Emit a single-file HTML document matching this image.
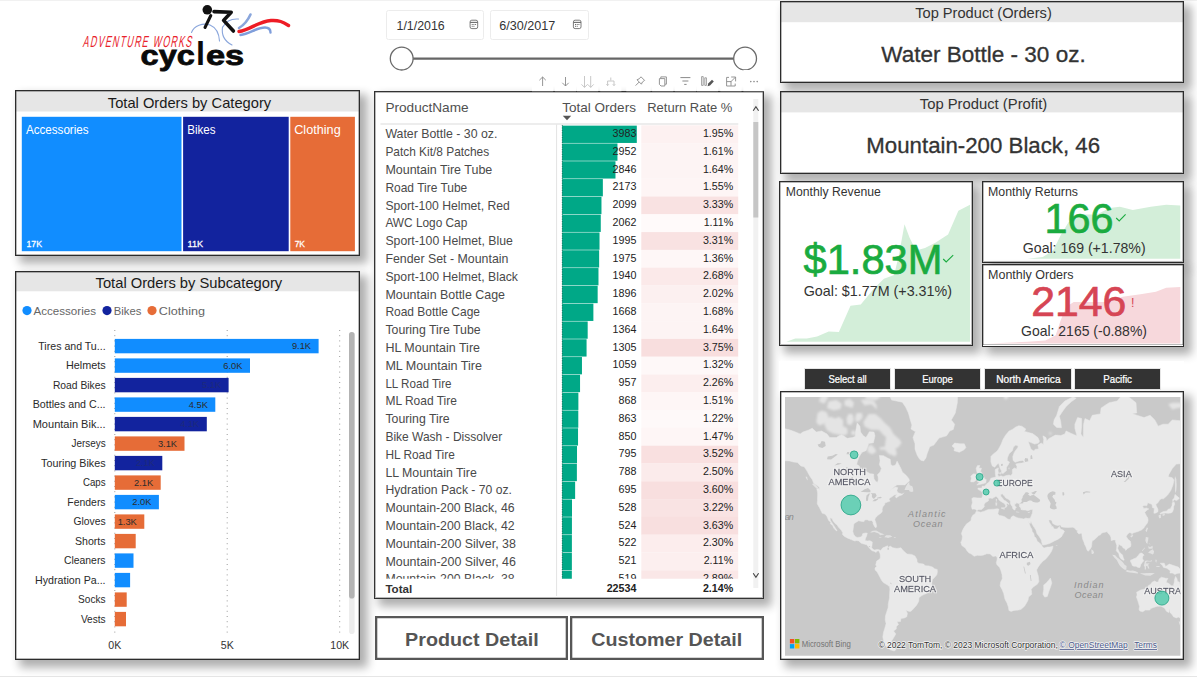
<!DOCTYPE html>
<html lang="en"><head><meta charset="utf-8">
<title>Adventure Works Cycles - Executive Dashboard</title>
<style>
html,body{margin:0;padding:0;}
body{width:1197px;height:677px;overflow:hidden;background:#fff;position:relative;font-family:"Liberation Sans","DejaVu Sans",sans-serif;color:#333;}
.topline{position:absolute;left:0;top:0;width:1197px;height:1px;background:#f1f1f1;}
.botline{position:absolute;left:0;top:675.5px;width:1197px;height:1.5px;background:#e6e6e6;}
.panel{position:absolute;box-sizing:border-box;background:#fff;border:1px solid #2b2b2b;box-shadow:5.5px 5.5px 9px 2px rgba(0,0,0,.32);}
.panel svg.pv{position:absolute;left:-1px;top:-1px;overflow:hidden;}
svg text{font-family:"Liberation Sans","DejaVu Sans",sans-serif;}
.btn{position:absolute;box-sizing:border-box;background:#fff;box-shadow:inset 0 0 0 2.3px #575757;}
.slc{position:absolute;box-sizing:border-box;background:#333;box-shadow:0 0 0 1px #e6e6e6;}
.datebox{position:absolute;box-sizing:border-box;border:1px solid #ececec;border-radius:2.5px;background:#fff;}
</style></head><body>
<div class="topline"></div><div class="botline"></div>

<svg id="logo" style="position:absolute;left:60px;top:0" width="260" height="90" viewBox="60 0 260 90">
<g fill="none" stroke="#8aa6dc" stroke-width="1.1" stroke-linecap="round">
<path d="M191.5 32.5 C194 25.5 203 22.5 210 25 C216 27.5 219 33 219.5 41"/>
<path d="M222.5 27 C221.5 34 224 41 232 45"/>
<path d="M222.8 27 C226 21 232 18.5 238.5 19"/>
</g>
<g fill="none" stroke-linecap="round">
<path d="M239 28 C244 25 248 20 250.5 14.5" stroke="#8aa6dc" stroke-width="2.6"/>
<path d="M240.5 35 C250 34 256 27.5 265 27.5 C268.5 27.5 270.5 29.5 270.5 32.5" stroke="#7f9edb" stroke-width="2.4"/>
<path d="M239 31.5 C250 30 258 21.5 271 20.5 C279 20 283 22 288.5 25.5" stroke="#ee1c25" stroke-width="3.4"/>
</g>
<circle cx="207.3" cy="9.8" r="4.8" fill="#111"/>
<g fill="none" stroke="#111" stroke-linecap="round" stroke-linejoin="round">
<path d="M210.8 15.5 L205 27.5" stroke-width="3"/>
<path d="M214 11.6 L231.2 12.2 L223.6 20.4 L233.4 31" stroke-width="3.6"/>
</g>
<g transform="translate(82.6,46.7) skewX(-12) scale(0.55,1)"><text x="0.00" y="0.00" font-size="16" fill="#e8222b" textLength="197.27" lengthAdjust="spacing">ADVENTURE WORKS</text></g>
<text y="64.7" font-weight="bold" fill="#0a0a0a" stroke="#0a0a0a" stroke-width="0.8"><tspan x="140.6" font-size="27.5" textLength="54.3" lengthAdjust="spacingAndGlyphs">cyc</tspan><tspan x="195.9" font-size="34" stroke-width="0" textLength="9" lengthAdjust="spacingAndGlyphs">l</tspan><tspan x="206" font-size="27.5" textLength="38.2" lengthAdjust="spacingAndGlyphs">es</tspan></text>
</svg>
<div class="panel treemap" style="left:15px;top:90px;width:344.5px;height:165.5px;">
<svg class="pv" width="344.5" height="165.5" viewBox="15 90 344.5 165.5">
<rect x="16" y="91" width="343" height="20.5" fill="#e6e6e6"/>
<text x="189.50" y="107.60" font-size="14.6" fill="#1a1a1a" text-anchor="middle" textLength="163.40" lengthAdjust="spacingAndGlyphs">Total Orders by Category</text>
<rect x="21.8" y="116.8" width="159.7" height="134.4" fill="#118dff"/>
<rect x="183.1" y="116.8" width="105.6" height="134.4" fill="#12239e"/>
<rect x="290.3" y="116.8" width="64.6" height="134.4" fill="#e66c37"/>
<text x="25.90" y="133.50" font-size="12" fill="#fff" textLength="62.70" lengthAdjust="spacingAndGlyphs">Accessories</text>
<text x="187.20" y="133.50" font-size="12" fill="#fff" textLength="28.30" lengthAdjust="spacingAndGlyphs">Bikes</text>
<text x="294.20" y="133.50" font-size="12" fill="#fff" textLength="46.50" lengthAdjust="spacingAndGlyphs">Clothing</text>
<text x="26.50" y="247.00" font-size="9.8" fill="#fff" textLength="15.50" lengthAdjust="spacingAndGlyphs" stroke="#fff" stroke-width="0.3">17K</text>
<text x="187.60" y="247.00" font-size="9.8" fill="#fff" textLength="15.50" lengthAdjust="spacingAndGlyphs" stroke="#fff" stroke-width="0.3">11K</text>
<text x="294.70" y="247.00" font-size="9.8" fill="#fff" textLength="10.30" lengthAdjust="spacingAndGlyphs" stroke="#fff" stroke-width="0.3">7K</text>
<rect x="16.2" y="91.2" width="342.6" height="163.6" fill="none" stroke="#2b2b2b" stroke-opacity="0.8" stroke-width="0.4"/>
</svg></div>
<div class="panel bars" style="left:15px;top:271px;width:344.5px;height:389px;">
<svg class="pv" width="344.5" height="389" viewBox="15 271 344.5 389">
<rect x="16" y="272" width="343" height="19.3" fill="#e6e6e6"/>
<text x="188.90" y="287.60" font-size="14.6" fill="#1a1a1a" text-anchor="middle" textLength="186.70" lengthAdjust="spacingAndGlyphs">Total Orders by Subcategory</text>
<circle cx="27" cy="310.6" r="4.6" fill="#118dff"/>
<text x="33.50" y="314.60" font-size="11.6" fill="#666" textLength="62.50" lengthAdjust="spacingAndGlyphs">Accessories</text>
<circle cx="107" cy="310.6" r="4.6" fill="#12239e"/>
<text x="113.80" y="314.60" font-size="11.6" fill="#666" textLength="27.60" lengthAdjust="spacingAndGlyphs">Bikes</text>
<circle cx="152" cy="310.6" r="4.6" fill="#e66c37"/>
<text x="158.80" y="314.60" font-size="11.6" fill="#666" textLength="46.20" lengthAdjust="spacingAndGlyphs">Clothing</text>
<line x1="114.8" y1="330" x2="114.8" y2="634" stroke="#9a9a9a" stroke-width="1" stroke-dasharray="1 4.2"/>
<line x1="227.2" y1="330" x2="227.2" y2="634" stroke="#9a9a9a" stroke-width="1" stroke-dasharray="1 4.2"/>
<line x1="339.7" y1="330" x2="339.7" y2="634" stroke="#9a9a9a" stroke-width="1" stroke-dasharray="1 4.2"/>
<rect x="114.8" y="338.9" width="203.8" height="14.4" fill="#118dff"/>
<text x="105.60" y="349.70" font-size="11" fill="#2a2a2a" text-anchor="end" textLength="67.30" lengthAdjust="spacingAndGlyphs">Tires and Tu...</text>
<text x="311.06" y="349.30" font-size="9.3" fill="#2b2b2b" text-anchor="end">9.1K</text>
<rect x="114.8" y="358.4" width="135.2" height="14.4" fill="#118dff"/>
<text x="105.60" y="369.20" font-size="11" fill="#2a2a2a" text-anchor="end" textLength="39.70" lengthAdjust="spacingAndGlyphs">Helmets</text>
<text x="242.46" y="368.80" font-size="9.3" fill="#2b2b2b" text-anchor="end">6.0K</text>
<rect x="114.8" y="377.9" width="113.8" height="14.4" fill="#12239e"/>
<text x="105.60" y="388.70" font-size="11" fill="#2a2a2a" text-anchor="end" textLength="52.70" lengthAdjust="spacingAndGlyphs">Road Bikes</text>
<text x="221.10" y="388.30" font-size="9.3" fill="#1d2a7a" text-anchor="end">5.1K</text>
<rect x="114.8" y="397.4" width="100.5" height="14.4" fill="#118dff"/>
<text x="105.60" y="408.20" font-size="11" fill="#2a2a2a" text-anchor="end" textLength="72.90" lengthAdjust="spacingAndGlyphs">Bottles and C...</text>
<text x="207.83" y="407.80" font-size="9.3" fill="#2b2b2b" text-anchor="end">4.5K</text>
<rect x="114.8" y="416.9" width="92.0" height="14.4" fill="#12239e"/>
<text x="105.60" y="427.70" font-size="11" fill="#2a2a2a" text-anchor="end" textLength="72.90" lengthAdjust="spacingAndGlyphs">Mountain Bik...</text>
<text x="199.28" y="427.30" font-size="9.3" fill="#1d2a7a" text-anchor="end">4.1K</text>
<rect x="114.8" y="436.4" width="69.7" height="14.4" fill="#e66c37"/>
<text x="105.60" y="447.20" font-size="11" fill="#2a2a2a" text-anchor="end" textLength="34.10" lengthAdjust="spacingAndGlyphs">Jerseys</text>
<text x="177.02" y="446.80" font-size="9.3" fill="#2b2b2b" text-anchor="end">3.1K</text>
<rect x="114.8" y="455.9" width="47.5" height="14.4" fill="#12239e"/>
<text x="105.60" y="466.70" font-size="11" fill="#2a2a2a" text-anchor="end" textLength="64.50" lengthAdjust="spacingAndGlyphs">Touring Bikes</text>
<text x="154.75" y="466.30" font-size="9.3" fill="#1d2a7a" text-anchor="end">2.1K</text>
<rect x="114.8" y="475.4" width="45.9" height="14.4" fill="#e66c37"/>
<text x="105.60" y="486.20" font-size="11" fill="#2a2a2a" text-anchor="end" textLength="22.60" lengthAdjust="spacingAndGlyphs">Caps</text>
<text x="153.18" y="485.80" font-size="9.3" fill="#2b2b2b" text-anchor="end">2.1K</text>
<rect x="114.8" y="494.9" width="44.1" height="14.4" fill="#118dff"/>
<text x="105.60" y="505.70" font-size="11" fill="#2a2a2a" text-anchor="end" textLength="38.30" lengthAdjust="spacingAndGlyphs">Fenders</text>
<text x="151.38" y="505.30" font-size="9.3" fill="#2b2b2b" text-anchor="end">2.0K</text>
<rect x="114.8" y="514.4" width="29.5" height="14.4" fill="#e66c37"/>
<text x="105.60" y="525.20" font-size="11" fill="#2a2a2a" text-anchor="end" textLength="32.10" lengthAdjust="spacingAndGlyphs">Gloves</text>
<text x="136.76" y="524.80" font-size="9.3" fill="#2b2b2b" text-anchor="end">1.3K</text>
<rect x="114.8" y="533.9" width="20.9" height="14.4" fill="#e66c37"/>
<text x="105.60" y="544.70" font-size="11" fill="#2a2a2a" text-anchor="end" textLength="30.60" lengthAdjust="spacingAndGlyphs">Shorts</text>
<rect x="114.8" y="553.4" width="18.7" height="14.4" fill="#118dff"/>
<text x="105.60" y="564.20" font-size="11" fill="#2a2a2a" text-anchor="end" textLength="41.70" lengthAdjust="spacingAndGlyphs">Cleaners</text>
<rect x="114.8" y="572.9" width="15.3" height="14.4" fill="#118dff"/>
<text x="105.60" y="583.70" font-size="11" fill="#2a2a2a" text-anchor="end" textLength="70.50" lengthAdjust="spacingAndGlyphs">Hydration Pa...</text>
<rect x="114.8" y="592.4" width="11.9" height="14.4" fill="#e66c37"/>
<text x="105.60" y="603.20" font-size="11" fill="#2a2a2a" text-anchor="end" textLength="27.50" lengthAdjust="spacingAndGlyphs">Socks</text>
<rect x="114.8" y="611.9" width="11.2" height="14.4" fill="#e66c37"/>
<text x="105.60" y="622.70" font-size="11" fill="#2a2a2a" text-anchor="end" textLength="24.70" lengthAdjust="spacingAndGlyphs">Vests</text>
<text x="114.80" y="649.30" font-size="10.6" fill="#333" text-anchor="middle">0K</text>
<text x="227.25" y="649.30" font-size="10.6" fill="#333" text-anchor="middle">5K</text>
<text x="339.70" y="649.30" font-size="10.6" fill="#333" text-anchor="middle">10K</text>
<rect x="349" y="332" width="5.6" height="302" rx="2.8" fill="#ededed"/>
<rect x="349" y="332" width="5.6" height="266.5" rx="2.8" fill="#b3b3b3"/>
<rect x="16.2" y="272.2" width="342.6" height="386.6" fill="none" stroke="#2b2b2b" stroke-opacity="0.8" stroke-width="0.4"/>
</svg></div>
<div class="datebox" style="left:386px;top:10px;width:97.8px;height:29.5px"></div>
<div class="datebox" style="left:490px;top:10px;width:98.5px;height:29.5px"></div>
<svg id="dates" style="position:absolute;left:380px;top:0" width="390" height="75" viewBox="380 0 390 75">
<text x="396.50" y="29.80" font-size="12.3" fill="#333" textLength="48.20" lengthAdjust="spacingAndGlyphs">1/1/2016</text>
<text x="499.30" y="29.80" font-size="12.3" fill="#333" textLength="56.00" lengthAdjust="spacingAndGlyphs">6/30/2017</text>
<g fill="none" stroke="#6b6b6b" stroke-width="0.9"><rect x="470.1" y="20.2" width="7.6" height="8.4" rx="1.7"/><line x1="470.1" y1="22.4" x2="477.7" y2="22.4" stroke-width="1.1"/></g><g fill="#6b6b6b"><rect x="471.7" y="24.0" width="1" height="1"/><rect x="473.4" y="24.0" width="1" height="1"/><rect x="475.1" y="24.0" width="1" height="1"/><rect x="471.7" y="25.8" width="1" height="1"/><rect x="473.4" y="25.8" width="1" height="1"/></g>
<g fill="none" stroke="#6b6b6b" stroke-width="0.9"><rect x="573.4" y="20.2" width="7.6" height="8.4" rx="1.7"/><line x1="573.4" y1="22.4" x2="581.0" y2="22.4" stroke-width="1.1"/></g><g fill="#6b6b6b"><rect x="575.0" y="24.0" width="1" height="1"/><rect x="576.7" y="24.0" width="1" height="1"/><rect x="578.4" y="24.0" width="1" height="1"/><rect x="575.0" y="25.8" width="1" height="1"/><rect x="576.7" y="25.8" width="1" height="1"/></g>
<line x1="413" y1="58.6" x2="734" y2="58.6" stroke="#666" stroke-width="2.4"/>
<circle cx="401.7" cy="58.6" r="11.4" fill="#fff" stroke="#6a6a6a" stroke-width="1.3"/>
<circle cx="745.1" cy="58.6" r="11.4" fill="#fff" stroke="#6a6a6a" stroke-width="1.3"/>
</svg>
<div class="panel table" style="left:374px;top:91px;width:390px;height:508px;border-color:#333;">
<svg class="pv" width="390" height="508" viewBox="374 91 390 508">
<defs><clipPath id="rowclip"><rect x="376" y="124.5" width="375" height="454.3"/></clipPath></defs>
<text x="385.40" y="111.80" font-size="13.4" fill="#505050" textLength="83.20" lengthAdjust="spacingAndGlyphs">ProductName</text>
<text x="562.30" y="111.80" font-size="13.4" fill="#505050" textLength="73.60" lengthAdjust="spacingAndGlyphs">Total Orders</text>
<text x="647.20" y="111.80" font-size="13.4" fill="#505050" textLength="85.20" lengthAdjust="spacingAndGlyphs">Return Rate %</text>
<path d="M562.8 115.8 L571.2 115.8 L567 120.2 Z" fill="#555"/>
<line x1="380.4" y1="124" x2="738.3" y2="124" stroke="#dcdcdc" stroke-width="1.2"/>
<g clip-path="url(#rowclip)">
<rect x="641.3" y="125.30" width="96.9" height="17.90" fill="#fdf1f1"/>
<rect x="562.1" y="125.65" width="74.70" height="17.30" fill="#00a887"/>
<text x="385.40" y="138.40" font-size="12.2" fill="#4a4a4a" textLength="112.00" lengthAdjust="spacingAndGlyphs">Water Bottle - 30 oz.</text>
<text x="636.40" y="136.90" font-size="10.7" fill="#222" text-anchor="end">3983</text>
<text x="733.20" y="136.90" font-size="10.7" fill="#222" text-anchor="end">1.95%</text>
<rect x="641.3" y="143.10" width="96.9" height="17.90" fill="#fdf4f4"/>
<rect x="562.1" y="143.45" width="55.36" height="17.30" fill="#00a887"/>
<text x="385.40" y="156.20" font-size="12.2" fill="#4a4a4a" textLength="103.80" lengthAdjust="spacingAndGlyphs">Patch Kit/8 Patches</text>
<text x="636.40" y="154.70" font-size="10.7" fill="#222" text-anchor="end">2952</text>
<text x="733.20" y="154.70" font-size="10.7" fill="#222" text-anchor="end">1.61%</text>
<rect x="641.3" y="160.90" width="96.9" height="17.90" fill="#fdf4f4"/>
<rect x="562.1" y="161.25" width="53.38" height="17.30" fill="#00a887"/>
<text x="385.40" y="174.00" font-size="12.2" fill="#4a4a4a" textLength="106.90" lengthAdjust="spacingAndGlyphs">Mountain Tire Tube</text>
<text x="636.40" y="172.50" font-size="10.7" fill="#222" text-anchor="end">2846</text>
<text x="733.20" y="172.50" font-size="10.7" fill="#222" text-anchor="end">1.64%</text>
<rect x="641.3" y="178.70" width="96.9" height="17.90" fill="#fef5f5"/>
<rect x="562.1" y="179.05" width="40.75" height="17.30" fill="#00a887"/>
<text x="385.40" y="191.80" font-size="12.2" fill="#4a4a4a" textLength="81.90" lengthAdjust="spacingAndGlyphs">Road Tire Tube</text>
<text x="636.40" y="190.30" font-size="10.7" fill="#222" text-anchor="end">2173</text>
<text x="733.20" y="190.30" font-size="10.7" fill="#222" text-anchor="end">1.55%</text>
<rect x="641.3" y="196.50" width="96.9" height="17.90" fill="#f9e2e2"/>
<rect x="562.1" y="196.85" width="39.37" height="17.30" fill="#00a887"/>
<text x="385.40" y="209.60" font-size="12.2" fill="#4a4a4a" textLength="124.40" lengthAdjust="spacingAndGlyphs">Sport-100 Helmet, Red</text>
<text x="636.40" y="208.10" font-size="10.7" fill="#222" text-anchor="end">2099</text>
<text x="733.20" y="208.10" font-size="10.7" fill="#222" text-anchor="end">3.33%</text>
<rect x="641.3" y="214.30" width="96.9" height="17.90" fill="#fffafa"/>
<rect x="562.1" y="214.65" width="38.67" height="17.30" fill="#00a887"/>
<text x="385.40" y="227.40" font-size="12.2" fill="#4a4a4a" textLength="81.90" lengthAdjust="spacingAndGlyphs">AWC Logo Cap</text>
<text x="636.40" y="225.90" font-size="10.7" fill="#222" text-anchor="end">2062</text>
<text x="733.20" y="225.90" font-size="10.7" fill="#222" text-anchor="end">1.11%</text>
<rect x="641.3" y="232.10" width="96.9" height="17.90" fill="#f9e2e2"/>
<rect x="562.1" y="232.45" width="37.42" height="17.30" fill="#00a887"/>
<text x="385.40" y="245.20" font-size="12.2" fill="#4a4a4a" textLength="127.40" lengthAdjust="spacingAndGlyphs">Sport-100 Helmet, Blue</text>
<text x="636.40" y="243.70" font-size="10.7" fill="#222" text-anchor="end">1995</text>
<text x="733.20" y="243.70" font-size="10.7" fill="#222" text-anchor="end">3.31%</text>
<rect x="641.3" y="249.90" width="96.9" height="17.90" fill="#fef7f7"/>
<rect x="562.1" y="250.25" width="37.04" height="17.30" fill="#00a887"/>
<text x="385.40" y="263.00" font-size="12.2" fill="#4a4a4a" textLength="123.00" lengthAdjust="spacingAndGlyphs">Fender Set - Mountain</text>
<text x="636.40" y="261.50" font-size="10.7" fill="#222" text-anchor="end">1975</text>
<text x="733.20" y="261.50" font-size="10.7" fill="#222" text-anchor="end">1.36%</text>
<rect x="641.3" y="267.70" width="96.9" height="17.90" fill="#fbe9e9"/>
<rect x="562.1" y="268.05" width="36.38" height="17.30" fill="#00a887"/>
<text x="385.40" y="280.80" font-size="12.2" fill="#4a4a4a" textLength="132.60" lengthAdjust="spacingAndGlyphs">Sport-100 Helmet, Black</text>
<text x="636.40" y="279.30" font-size="10.7" fill="#222" text-anchor="end">1940</text>
<text x="733.20" y="279.30" font-size="10.7" fill="#222" text-anchor="end">2.68%</text>
<rect x="641.3" y="285.50" width="96.9" height="17.90" fill="#fcf0f0"/>
<rect x="562.1" y="285.85" width="35.56" height="17.30" fill="#00a887"/>
<text x="385.40" y="298.60" font-size="12.2" fill="#4a4a4a" textLength="119.60" lengthAdjust="spacingAndGlyphs">Mountain Bottle Cage</text>
<text x="636.40" y="297.10" font-size="10.7" fill="#222" text-anchor="end">1896</text>
<text x="733.20" y="297.10" font-size="10.7" fill="#222" text-anchor="end">2.02%</text>
<rect x="641.3" y="303.30" width="96.9" height="17.90" fill="#fdf4f4"/>
<rect x="562.1" y="303.65" width="31.28" height="17.30" fill="#00a887"/>
<text x="385.40" y="316.40" font-size="12.2" fill="#4a4a4a" textLength="94.60" lengthAdjust="spacingAndGlyphs">Road Bottle Cage</text>
<text x="636.40" y="314.90" font-size="10.7" fill="#222" text-anchor="end">1668</text>
<text x="733.20" y="314.90" font-size="10.7" fill="#222" text-anchor="end">1.68%</text>
<rect x="641.3" y="321.10" width="96.9" height="17.90" fill="#fdf4f4"/>
<rect x="562.1" y="321.45" width="25.58" height="17.30" fill="#00a887"/>
<text x="385.40" y="334.20" font-size="12.2" fill="#4a4a4a" textLength="95.20" lengthAdjust="spacingAndGlyphs">Touring Tire Tube</text>
<text x="636.40" y="332.70" font-size="10.7" fill="#222" text-anchor="end">1364</text>
<text x="733.20" y="332.70" font-size="10.7" fill="#222" text-anchor="end">1.64%</text>
<rect x="641.3" y="338.90" width="96.9" height="17.90" fill="#f8dede"/>
<rect x="562.1" y="339.25" width="24.47" height="17.30" fill="#00a887"/>
<text x="385.40" y="352.00" font-size="12.2" fill="#4a4a4a" textLength="94.60" lengthAdjust="spacingAndGlyphs">HL Mountain Tire</text>
<text x="636.40" y="350.50" font-size="10.7" fill="#222" text-anchor="end">1305</text>
<text x="733.20" y="350.50" font-size="10.7" fill="#222" text-anchor="end">3.75%</text>
<rect x="641.3" y="356.70" width="96.9" height="17.90" fill="#fef8f8"/>
<rect x="562.1" y="357.05" width="19.86" height="17.30" fill="#00a887"/>
<text x="385.40" y="369.80" font-size="12.2" fill="#4a4a4a" textLength="96.60" lengthAdjust="spacingAndGlyphs">ML Mountain Tire</text>
<text x="636.40" y="368.30" font-size="10.7" fill="#222" text-anchor="end">1059</text>
<text x="733.20" y="368.30" font-size="10.7" fill="#222" text-anchor="end">1.32%</text>
<rect x="641.3" y="374.50" width="96.9" height="17.90" fill="#fceeee"/>
<rect x="562.1" y="374.85" width="17.95" height="17.30" fill="#00a887"/>
<text x="385.40" y="387.60" font-size="12.2" fill="#4a4a4a" textLength="66.10" lengthAdjust="spacingAndGlyphs">LL Road Tire</text>
<text x="636.40" y="386.10" font-size="10.7" fill="#222" text-anchor="end">957</text>
<text x="733.20" y="386.10" font-size="10.7" fill="#222" text-anchor="end">2.26%</text>
<rect x="641.3" y="392.30" width="96.9" height="17.90" fill="#fef6f6"/>
<rect x="562.1" y="392.65" width="16.28" height="17.30" fill="#00a887"/>
<text x="385.40" y="405.40" font-size="12.2" fill="#4a4a4a" textLength="71.50" lengthAdjust="spacingAndGlyphs">ML Road Tire</text>
<text x="636.40" y="403.90" font-size="10.7" fill="#222" text-anchor="end">868</text>
<text x="733.20" y="403.90" font-size="10.7" fill="#222" text-anchor="end">1.51%</text>
<rect x="641.3" y="410.10" width="96.9" height="17.90" fill="#fef9f9"/>
<rect x="562.1" y="410.45" width="16.19" height="17.30" fill="#00a887"/>
<text x="385.40" y="423.20" font-size="12.2" fill="#4a4a4a" textLength="64.30" lengthAdjust="spacingAndGlyphs">Touring Tire</text>
<text x="636.40" y="421.70" font-size="10.7" fill="#222" text-anchor="end">863</text>
<text x="733.20" y="421.70" font-size="10.7" fill="#222" text-anchor="end">1.22%</text>
<rect x="641.3" y="427.90" width="96.9" height="17.90" fill="#fef6f6"/>
<rect x="562.1" y="428.25" width="15.94" height="17.30" fill="#00a887"/>
<text x="385.40" y="441.00" font-size="12.2" fill="#4a4a4a" textLength="116.90" lengthAdjust="spacingAndGlyphs">Bike Wash - Dissolver</text>
<text x="636.40" y="439.50" font-size="10.7" fill="#222" text-anchor="end">850</text>
<text x="733.20" y="439.50" font-size="10.7" fill="#222" text-anchor="end">1.47%</text>
<rect x="641.3" y="445.70" width="96.9" height="17.90" fill="#f9e0e0"/>
<rect x="562.1" y="446.05" width="14.91" height="17.30" fill="#00a887"/>
<text x="385.40" y="458.80" font-size="12.2" fill="#4a4a4a" textLength="69.40" lengthAdjust="spacingAndGlyphs">HL Road Tire</text>
<text x="636.40" y="457.30" font-size="10.7" fill="#222" text-anchor="end">795</text>
<text x="733.20" y="457.30" font-size="10.7" fill="#222" text-anchor="end">3.52%</text>
<rect x="641.3" y="463.50" width="96.9" height="17.90" fill="#fbebeb"/>
<rect x="562.1" y="463.85" width="14.78" height="17.30" fill="#00a887"/>
<text x="385.40" y="476.60" font-size="12.2" fill="#4a4a4a" textLength="91.40" lengthAdjust="spacingAndGlyphs">LL Mountain Tire</text>
<text x="636.40" y="475.10" font-size="10.7" fill="#222" text-anchor="end">788</text>
<text x="733.20" y="475.10" font-size="10.7" fill="#222" text-anchor="end">2.50%</text>
<rect x="641.3" y="481.30" width="96.9" height="17.90" fill="#f8dfdf"/>
<rect x="562.1" y="481.65" width="13.03" height="17.30" fill="#00a887"/>
<text x="385.40" y="494.40" font-size="12.2" fill="#4a4a4a" textLength="126.60" lengthAdjust="spacingAndGlyphs">Hydration Pack - 70 oz.</text>
<text x="636.40" y="492.90" font-size="10.7" fill="#222" text-anchor="end">695</text>
<text x="733.20" y="492.90" font-size="10.7" fill="#222" text-anchor="end">3.60%</text>
<rect x="641.3" y="499.10" width="96.9" height="17.90" fill="#f9e3e3"/>
<rect x="562.1" y="499.45" width="9.90" height="17.30" fill="#00a887"/>
<text x="385.40" y="512.20" font-size="12.2" fill="#4a4a4a" textLength="129.20" lengthAdjust="spacingAndGlyphs">Mountain-200 Black, 46</text>
<text x="636.40" y="510.70" font-size="10.7" fill="#222" text-anchor="end">528</text>
<text x="733.20" y="510.70" font-size="10.7" fill="#222" text-anchor="end">3.22%</text>
<rect x="641.3" y="516.90" width="96.9" height="17.90" fill="#f8dfdf"/>
<rect x="562.1" y="517.25" width="9.83" height="17.30" fill="#00a887"/>
<text x="385.40" y="530.00" font-size="12.2" fill="#4a4a4a" textLength="129.20" lengthAdjust="spacingAndGlyphs">Mountain-200 Black, 42</text>
<text x="636.40" y="528.50" font-size="10.7" fill="#222" text-anchor="end">524</text>
<text x="733.20" y="528.50" font-size="10.7" fill="#222" text-anchor="end">3.63%</text>
<rect x="641.3" y="534.70" width="96.9" height="17.90" fill="#fceded"/>
<rect x="562.1" y="535.05" width="9.79" height="17.30" fill="#00a887"/>
<text x="385.40" y="547.80" font-size="12.2" fill="#4a4a4a" textLength="130.50" lengthAdjust="spacingAndGlyphs">Mountain-200 Silver, 38</text>
<text x="636.40" y="546.30" font-size="10.7" fill="#222" text-anchor="end">522</text>
<text x="733.20" y="546.30" font-size="10.7" fill="#222" text-anchor="end">2.30%</text>
<rect x="641.3" y="552.50" width="96.9" height="17.90" fill="#fcefef"/>
<rect x="562.1" y="552.85" width="9.77" height="17.30" fill="#00a887"/>
<text x="385.40" y="565.60" font-size="12.2" fill="#4a4a4a" textLength="130.50" lengthAdjust="spacingAndGlyphs">Mountain-200 Silver, 46</text>
<text x="636.40" y="564.10" font-size="10.7" fill="#222" text-anchor="end">521</text>
<text x="733.20" y="564.10" font-size="10.7" fill="#222" text-anchor="end">2.11%</text>
<rect x="641.3" y="570.30" width="96.9" height="17.90" fill="#fae7e7"/>
<rect x="562.1" y="570.65" width="9.73" height="17.30" fill="#00a887"/>
<text x="385.40" y="583.40" font-size="12.2" fill="#4a4a4a" textLength="129.20" lengthAdjust="spacingAndGlyphs">Mountain-200 Black, 38</text>
<text x="636.40" y="581.90" font-size="10.7" fill="#222" text-anchor="end">519</text>
<text x="733.20" y="581.90" font-size="10.7" fill="#222" text-anchor="end">2.89%</text>
<line x1="562.3" y1="125" x2="562.3" y2="579" stroke="#0b5a49" stroke-width="0.7" stroke-dasharray="1.2 1.2"/>
</g>
<line x1="556.6" y1="124.5" x2="556.6" y2="596" stroke="#e3e3e3" stroke-width="1"/>
<text x="385.40" y="592.60" font-size="11.6" fill="#333" font-weight="bold">Total</text>
<text x="636.40" y="591.60" font-size="10.7" fill="#222" text-anchor="end" font-weight="bold">22534</text>
<text x="733.20" y="591.60" font-size="10.7" fill="#222" text-anchor="end" font-weight="bold">2.14%</text>
<rect x="753.3" y="99" width="5" height="489" fill="#f1f1f1"/>
<rect x="753.3" y="122" width="5" height="95.5" fill="#c6c6c6"/>
<path d="M753.2 110.8 L755.9 106.8 L758.6 110.8" fill="none" stroke="#444" stroke-width="1.1"/>
<path d="M753.2 573.2 L755.9 577.2 L758.6 573.2" fill="none" stroke="#444" stroke-width="1.1"/>
<rect x="375.2" y="92.2" width="387.6" height="505.6" fill="none" stroke="#2b2b2b" stroke-opacity="0.8" stroke-width="0.4"/>
</svg></div>
<svg id="vhead" style="position:absolute;left:530px;top:70px" width="236" height="22" viewBox="530 70 236 22">
<rect x="532.0" y="70" width="21.2" height="21.2" fill="#fff"/>
<rect x="554.9" y="70" width="21.2" height="21.2" fill="#fff"/>
<rect x="576.9" y="70" width="21.2" height="21.2" fill="#fff"/>
<rect x="600.2" y="70" width="21.2" height="21.2" fill="#fff"/>
<rect x="626.3" y="70" width="24.2" height="21.2" fill="#fff"/>
<rect x="652.1" y="70" width="21.2" height="21.2" fill="#fff"/>
<rect x="674.8" y="70" width="21.2" height="21.2" fill="#fff"/>
<rect x="696.8" y="70" width="21.2" height="21.2" fill="#fff"/>
<rect x="720.3" y="70" width="21.2" height="21.2" fill="#fff"/>
<rect x="743.4" y="70" width="21.2" height="21.2" fill="#fff"/>
<path d="M542.6 86 V77 M539.4 80.2 L542.6 77 L545.8000000000001 80.2" fill="none" stroke="#8a8a8a" stroke-width="0.9"/>
<path d="M565.5 77 V86 M562.3 82.8 L565.5 86 L568.7 82.8" fill="none" stroke="#8a8a8a" stroke-width="0.9"/>
<path d="M584.5 76 V87.4 M581.5 84.4 L584.5 87.4 L587.5 84.4 M590.7 76 V87.4 M587.7 84.4 L590.7 87.4 L593.7 84.4" fill="none" stroke="#c2c2c2" stroke-width="0.9"/>
<path d="M610.8 77.5 V80.5 M607.6 85.5 V81 H614 V85.5 M606.4 84.3 L607.6 85.6 L608.8 84.3 M612.8 84.3 L614 85.6 L615.2 84.3" fill="none" stroke="#c2c2c2" stroke-width="0.9"/>
<path d="M641 76.8 L644.6 80.4 L642.4 82 L641.4 84.2 L637 79.8 L639.2 78.8 Z M639.2 82 L635.6 85.6" fill="none" stroke="#8a8a8a" stroke-width="0.9" stroke-linejoin="round"/>
<path d="M660.8 78.4 V76.9 H666.4 V84.2 H665 M659.4 78.6 H664.8 V86 H661 L659.4 84.4 Z" fill="none" stroke="#8a8a8a" stroke-width="0.9"/>
<path d="M680.4 77.6 H690.4 M682.4 81 H688.4 M684.2 84.4 H686.6" fill="none" stroke="#8a8a8a" stroke-width="1"/>
<path d="M701.6 76.6 H703.2 V85.4 H701.6 Z M704.8 77.8 H706.4 V85.4 H704.8 Z" fill="none" stroke="#8a8a8a" stroke-width="0.8"/><path d="M707.6 86.2 L708.2 83.6 L712 79.8 L713.8 81.6 L710 85.4 Z" fill="#555"/>
<path d="M729 77.4 H726.6 V86 H735.2 V83.6 M731.2 77 H735.6 V81.4 M735.4 77.2 L730.6 82 M726.8 81.6 H731 V85.8" fill="none" stroke="#8a8a8a" stroke-width="0.9"/>
<circle cx="750.8" cy="81.6" r="0.8" fill="#8a8a8a"/><circle cx="754" cy="81.6" r="0.8" fill="#8a8a8a"/><circle cx="757.2" cy="81.6" r="0.8" fill="#8a8a8a"/>
</svg>
<div class="btn" style="left:375.1px;top:616.1px;width:193.2px;height:43.6px"><svg width="193.2" height="43.6" viewBox="375.1 616.1 193.2 43.6"><text x="405.20" y="645.70" font-size="19.2" fill="#555" textLength="133.60" lengthAdjust="spacingAndGlyphs" font-weight="bold">Product Detail</text></svg></div>
<div class="btn" style="left:570.1px;top:616.1px;width:194.3px;height:43.6px"><svg width="194.3" height="43.6" viewBox="570.1 616.1 194.3 43.6"><text x="591.30" y="645.70" font-size="19.2" fill="#555" textLength="151.00" lengthAdjust="spacingAndGlyphs" font-weight="bold">Customer Detail</text></svg></div>
<div class="panel card1" style="left:780px;top:1px;width:404px;height:82px;">
<svg class="pv" width="404" height="82" viewBox="780 1 404 82">
<rect x="781" y="2" width="402" height="20.2" fill="#e6e6e6"/>
<text x="983.50" y="18.40" font-size="14.2" fill="#333" text-anchor="middle" textLength="136.60" lengthAdjust="spacingAndGlyphs">Top Product (Orders)</text>
<text x="983.50" y="62.40" font-size="21.4" fill="#333" text-anchor="middle" textLength="204.40" lengthAdjust="spacingAndGlyphs" stroke="#333" stroke-width="0.3">Water Bottle - 30 oz.</text>
<rect x="781.2" y="2.2" width="401.6" height="79.6" fill="none" stroke="#2b2b2b" stroke-opacity="0.8" stroke-width="0.4"/>
</svg></div>
<div class="panel card2" style="left:780px;top:91px;width:404px;height:83px;">
<svg class="pv" width="404" height="83" viewBox="780 91 404 83">
<rect x="781" y="92" width="402" height="20.4" fill="#e6e6e6"/>
<text x="983.50" y="108.60" font-size="14.2" fill="#333" text-anchor="middle" textLength="127.50" lengthAdjust="spacingAndGlyphs">Top Product (Profit)</text>
<text x="983.20" y="152.70" font-size="21.4" fill="#333" text-anchor="middle" textLength="233.70" lengthAdjust="spacingAndGlyphs" stroke="#333" stroke-width="0.3">Mountain-200 Black, 46</text>
<rect x="781.2" y="92.2" width="401.6" height="80.6" fill="none" stroke="#2b2b2b" stroke-opacity="0.8" stroke-width="0.4"/>
</svg></div>
<div class="panel kpi1" style="left:779px;top:181px;width:194px;height:165px;">
<svg class="pv" width="194" height="165" viewBox="779 181 194 165">
<polygon points="786.3,341.7 795.3,338.4 806.8,338.4 817.1,336.6 828.7,331.4 838.9,332.0 850.5,305.8 860.8,304.5 873.6,289.1 883.9,278.8 894.2,274.9 899.3,253.1 904.5,224.3 909.6,237.7 916.0,250.5 925.0,247.9 935.3,242.8 948.1,234.6 958.4,210.7 970.0,204.8 970.0,341.7" fill="#d3eed9"/>
<text x="785.80" y="195.80" font-size="11.9" fill="#333" textLength="95.00" lengthAdjust="spacingAndGlyphs">Monthly Revenue</text>
<text x="803.50" y="273.60" font-size="42.3" fill="#1aab40" textLength="139.00" lengthAdjust="spacingAndGlyphs" stroke="#1aab40" stroke-width="0.7">$1.83M</text>
<path d="M943.2 259 L946.2 262 L953.2 255.2" fill="none" stroke="#1aab40" stroke-width="1.1"/>
<text x="803.70" y="295.50" font-size="14.5" fill="#333" textLength="148.30" lengthAdjust="spacingAndGlyphs">Goal: $1.77M (+3.31%)</text>
<rect x="780.2" y="182.2" width="191.6" height="162.6" fill="none" stroke="#2b2b2b" stroke-opacity="0.8" stroke-width="0.4"/>
</svg></div>
<div class="panel kpi2" style="left:982px;top:181px;width:202px;height:82px;">
<svg class="pv" width="202" height="82" viewBox="982 181 202 82">
<polygon points="987.6,258.8 1027.4,258.8 1042.8,257.0 1053.1,250.5 1060.8,235.1 1068.5,222.3 1083.9,214.6 1096.8,214.6 1109.6,208.1 1119.9,206.8 1132.8,209.9 1150.8,206.8 1166.2,204.8 1180.3,205.6 1180.3,258.8" fill="#d3eed9"/>
<text x="988.00" y="195.80" font-size="11.9" fill="#333" textLength="90.00" lengthAdjust="spacingAndGlyphs">Monthly Returns</text>
<text x="1044.60" y="233.00" font-size="42.3" fill="#1aab40" textLength="69.00" lengthAdjust="spacingAndGlyphs" stroke="#1aab40" stroke-width="0.7">166</text>
<path d="M1116.2 218 L1119.2 221 L1125.6 214.4" fill="none" stroke="#1aab40" stroke-width="1.1"/>
<text x="1022.80" y="253.10" font-size="14.5" fill="#333" textLength="122.80" lengthAdjust="spacingAndGlyphs">Goal: 169 (+1.78%)</text>
<rect x="983.2" y="182.2" width="199.6" height="79.6" fill="none" stroke="#2b2b2b" stroke-opacity="0.8" stroke-width="0.4"/>
</svg></div>
<div class="panel kpi3" style="left:982px;top:264px;width:202px;height:82.5px;">
<svg class="pv" width="202" height="82.5" viewBox="982 264 202 82.5">
<polygon points="987.6,343.6 1027.4,341.8 1045.4,340.5 1055.7,335.3 1060.8,319.9 1066.0,307.1 1073.7,301.9 1109.6,301.9 1122.5,296.8 1140.5,294.2 1155.9,291.7 1166.2,287.8 1180.3,287.0 1180.3,343.6" fill="#f7d8dc"/>
<text x="988.00" y="278.80" font-size="11.9" fill="#333" textLength="85.50" lengthAdjust="spacingAndGlyphs">Monthly Orders</text>
<text x="1031.20" y="316.00" font-size="42.3" fill="#d64554" textLength="95.20" lengthAdjust="spacingAndGlyphs" stroke="#d64554" stroke-width="0.7">2146</text>
<text x="1131.00" y="307.20" font-size="12.5" fill="#d64554">!</text>
<text x="1021.00" y="335.90" font-size="14.5" fill="#333" textLength="126.00" lengthAdjust="spacingAndGlyphs">Goal: 2165 (-0.88%)</text>
<rect x="983.2" y="265.2" width="199.6" height="79.6" fill="none" stroke="#2b2b2b" stroke-opacity="0.8" stroke-width="0.4"/>
</svg></div>
<div style="position:absolute;left:779px;top:361px;width:405px;height:31px;background:#fff"></div>
<div class="slc" style="left:805px;top:369px;width:85.1px;height:19.8px"><svg width="85.1" height="19.8" viewBox="0 0 85.1 19.8" style="display:block"><text x="42.55" y="14.10" font-size="10.6" fill="#fff" text-anchor="middle" textLength="38.30" lengthAdjust="spacingAndGlyphs" stroke="#fff" stroke-width="0.25">Select all</text></svg></div>
<div class="slc" style="left:895.2px;top:369px;width:85.1px;height:19.8px"><svg width="85.1" height="19.8" viewBox="0 0 85.1 19.8" style="display:block"><text x="42.55" y="14.10" font-size="10.6" fill="#fff" text-anchor="middle" textLength="30.50" lengthAdjust="spacingAndGlyphs" stroke="#fff" stroke-width="0.25">Europe</text></svg></div>
<div class="slc" style="left:984.6px;top:369px;width:86.8px;height:19.8px"><svg width="86.8" height="19.8" viewBox="0 0 86.8 19.8" style="display:block"><text x="43.40" y="14.10" font-size="10.6" fill="#fff" text-anchor="middle" textLength="64.50" lengthAdjust="spacingAndGlyphs" stroke="#fff" stroke-width="0.25">North America</text></svg></div>
<div class="slc" style="left:1074.7px;top:369px;width:85.3px;height:19.8px"><svg width="85.3" height="19.8" viewBox="0 0 85.3 19.8" style="display:block"><text x="42.65" y="14.10" font-size="10.6" fill="#fff" text-anchor="middle" textLength="28.60" lengthAdjust="spacingAndGlyphs" stroke="#fff" stroke-width="0.25">Pacific</text></svg></div>
<div class="panel map" style="left:780px;top:391px;width:404px;height:269px;">
<svg class="pv" width="404" height="269" viewBox="780 391 404 269">
<defs><clipPath id="mapclip"><rect x="785" y="397" width="395.4" height="258.8"/></clipPath><filter id="soft" x="-5%" y="-5%" width="110%" height="110%"><feGaussianBlur stdDeviation="0.45"/></filter></defs>
<g clip-path="url(#mapclip)">
<rect x="785" y="397" width="396" height="259" fill="#c9c9c9"/>
<g filter="url(#soft)">
<path d="M758.5 445.7 763.9 442.8 766.6 441.1 762.5 435.8 769.3 428.2 774.6 425.0 782.7 428.2 789.4 429.8 794.8 431.7 800.2 434.0 802.8 432.1 808.2 430.2 812.2 428.2 816.3 432.1 821.6 431.0 827.0 434.0 829.7 437.6 836.4 437.6 839.1 435.8 841.8 434.7 847.2 438.3 852.5 437.6 855.2 436.5 855.5 432.1 857.2 422.9 859.9 426.2 860.6 432.1 863.3 435.8 866.0 437.6 868.7 432.9 869.3 431.7 874.0 432.1 875.0 435.8 873.4 442.8 868.7 443.4 867.3 447.6 866.0 450.7 862.0 452.2 859.3 456.5 857.2 462.0 856.8 464.6 859.3 465.9 859.9 469.6 863.3 469.6 867.3 472.0 870.0 473.7 873.6 474.1 874.0 478.9 875.4 481.1 877.4 482.6 878.3 480.0 878.1 476.7 877.4 474.8 880.1 472.0 881.4 468.4 879.4 464.6 880.1 460.7 879.4 455.4 883.4 455.7 887.5 457.9 890.2 459.3 890.8 464.6 892.8 465.9 895.5 465.1 897.1 461.2 900.9 468.4 902.3 472.0 906.3 475.5 909.0 478.9 909.4 481.1 907.6 482.4 904.9 484.9 900.9 484.9 896.9 484.9 894.2 486.7 890.8 489.7 888.8 491.7 891.5 489.3 895.5 486.9 897.8 487.7 896.9 490.3 897.6 492.6 899.6 493.2 902.3 494.2 903.6 492.8 902.3 494.7 898.9 496.0 896.2 497.9 895.3 496.6 896.9 494.6 894.2 495.1 891.5 497.0 889.5 498.3 889.1 499.7 890.2 501.1 887.5 502.0 884.8 503.1 884.5 505.0 882.8 506.7 882.1 509.2 882.4 510.9 881.4 512.8 879.4 514.3 877.4 515.7 875.4 518.0 874.8 519.7 876.1 523.4 876.6 526.4 876.1 527.5 875.1 527.4 874.3 526.1 873.1 523.7 873.0 521.9 871.4 520.4 869.3 520.7 867.3 519.7 864.6 520.0 864.0 521.6 862.0 521.4 858.6 520.8 856.6 521.9 853.9 523.7 853.5 526.4 852.8 531.5 853.6 534.3 855.2 536.4 857.2 537.5 860.6 537.0 862.2 535.7 862.8 533.6 866.0 532.9 867.3 533.2 866.7 535.7 865.7 538.1 864.9 540.6 867.3 540.9 870.0 540.7 872.3 542.0 872.0 545.4 871.6 547.4 873.0 549.3 874.7 550.1 877.0 549.4 879.4 549.8 880.4 550.8 879.7 552.4 878.7 550.8 876.7 551.2 876.1 552.4 874.0 551.2 872.0 550.8 870.0 548.8 868.9 547.4 866.7 544.7 864.0 544.0 861.3 543.3 858.6 540.9 856.6 540.5 854.6 541.0 851.2 539.6 847.8 538.2 844.5 536.4 842.5 534.6 842.7 532.5 841.1 530.0 838.4 527.1 837.1 524.9 835.1 523.4 833.1 521.1 832.1 518.5 830.0 517.7 830.4 520.4 832.4 523.4 834.4 526.4 836.0 529.0 837.1 530.7 836.2 530.7 833.7 528.1 832.7 525.6 830.4 523.7 830.8 522.2 828.6 520.4 827.4 517.6 826.8 516.2 825.0 514.1 822.3 513.3 820.6 510.0 819.6 507.9 817.9 505.0 817.2 503.4 817.5 500.6 817.6 496.0 817.6 492.8 816.7 488.5 819.0 488.7 819.6 490.3 819.2 487.3 816.9 485.3 813.6 483.2 812.5 480.0 810.2 476.7 808.9 474.4 806.9 470.8 804.2 466.7 800.8 465.9 797.5 462.5 793.4 462.0 789.4 460.9 785.4 460.7 782.7 463.8 780.0 464.6 780.7 459.3 777.3 464.6 773.3 469.6 769.3 473.2 763.9 475.5 769.3 469.6 771.9 465.1 766.6 463.3 762.5 459.3 761.2 453.7 766.6 450.7ZM886.1 387.6 891.5 399.9 902.3 402.2 905.6 407.0 908.4 413.0 910.3 419.9 911.9 425.0 911.0 429.0 915.4 431.7 913.0 437.6 915.0 443.8 915.0 449.2 917.3 455.4 919.7 459.3 921.3 460.4 923.7 460.9 925.9 457.9 927.1 453.7 929.7 446.7 933.8 445.1 939.1 438.0 946.6 435.8 949.7 431.0 953.3 429.4 954.6 424.2 951.3 419.9 955.3 413.0 957.3 402.7 958.0 387.6ZM952.0 446.0 954.6 443.1 960.0 443.8 964.3 443.8 965.9 447.6 964.0 449.8 959.3 452.2 956.0 451.3 954.0 450.7 954.6 448.2ZM880.4 550.8 882.8 547.8 884.8 547.1 887.5 545.8 888.4 547.4 890.2 546.1 892.8 547.8 896.9 548.5 900.9 547.8 902.3 549.4 903.6 550.9 907.0 554.1 911.7 554.4 915.0 556.1 917.0 559.7 917.0 562.1 919.0 563.4 923.7 564.1 925.1 565.7 929.1 565.9 932.5 567.1 934.5 568.7 937.2 569.4 937.4 572.1 936.8 574.8 934.5 577.5 932.5 579.5 931.8 582.9 931.5 586.1 930.5 589.2 929.1 592.0 926.4 593.5 923.7 594.6 921.1 596.1 919.0 597.8 918.8 601.3 916.4 605.4 914.3 607.7 912.3 610.1 910.3 611.6 907.6 610.9 905.7 610.1 907.4 613.3 906.8 616.7 904.3 618.0 900.9 618.4 900.5 621.5 896.9 621.8 898.5 624.5 896.5 626.3 896.2 629.1 893.5 631.0 895.8 633.9 893.5 637.9 891.5 641.0 892.3 644.0 892.4 646.0 896.2 649.4 894.2 651.0 890.2 649.8 886.1 646.4 884.1 643.1 882.8 636.9 883.4 632.9 884.8 628.2 886.1 623.6 885.2 620.1 885.5 615.8 886.8 611.7 888.1 607.7 888.3 603.8 889.5 597.8 889.6 593.5 889.9 589.2 889.6 586.8 887.5 585.0 883.4 582.6 881.7 580.6 880.4 578.1 878.7 574.8 877.0 571.7 875.1 570.1 875.0 568.1 876.7 566.3 875.7 565.0 876.1 563.2 876.7 561.0 878.3 560.1 880.1 558.4 880.4 556.5 880.1 554.1 879.7 552.4ZM976.3 511.2 980.8 512.2 984.2 511.2 988.2 509.5 993.6 509.2 997.4 508.7 999.0 509.2 998.3 511.7 997.9 513.8 999.2 515.4 1001.7 515.8 1004.8 516.8 1007.7 519.0 1010.4 519.6 1011.1 517.3 1013.1 515.8 1015.5 516.9 1017.8 517.9 1021.1 518.5 1023.8 519.0 1025.8 518.0 1027.6 518.5 1028.0 520.4 1029.2 523.4 1030.5 527.1 1031.9 529.3 1032.2 531.5 1033.9 533.6 1034.3 536.4 1035.9 537.8 1037.3 541.3 1039.3 542.7 1041.6 545.0 1042.4 546.7 1044.0 548.1 1047.3 547.1 1050.0 547.0 1053.0 546.2 1052.7 548.2 1051.4 551.5 1048.7 555.5 1046.0 558.8 1042.6 561.4 1040.0 564.5 1037.9 567.4 1036.6 570.1 1037.3 572.7 1038.3 576.1 1038.9 581.5 1037.3 584.3 1033.9 586.4 1031.2 589.2 1031.8 594.2 1028.5 597.1 1028.1 600.1 1026.5 603.1 1024.5 606.2 1021.1 609.3 1018.5 610.1 1013.8 610.4 1011.1 611.4 1008.9 610.4 1008.4 606.9 1007.0 603.1 1005.0 599.3 1003.7 593.5 1002.3 589.9 1000.1 585.7 1000.6 582.2 1002.3 578.8 1002.1 574.8 1000.7 570.1 999.6 567.4 997.0 564.8 996.3 562.8 997.0 560.1 997.2 557.5 995.6 556.1 992.9 556.4 990.2 553.9 986.9 553.7 982.9 555.2 980.2 555.5 977.5 555.3 974.1 556.3 971.4 554.1 968.8 552.8 966.7 550.4 965.4 548.1 963.4 546.7 961.8 545.4 960.8 542.4 962.0 539.9 962.4 536.4 961.4 533.6 962.7 530.0 964.3 527.1 966.7 523.8 969.0 522.2 971.0 520.4 971.3 518.0 972.8 515.2 975.1 513.8ZM1050.4 578.1 1051.8 582.9 1050.7 586.4 1048.7 592.0 1047.3 596.4 1044.7 597.1 1042.9 594.2 1043.7 589.9 1043.7 585.0 1046.0 583.3 1048.7 580.2ZM972.2 509.2 971.4 506.3 972.4 502.4 971.8 498.6 973.5 497.5 977.5 497.9 981.8 498.1 982.6 495.7 982.7 493.2 981.2 491.1 977.9 489.3 978.0 488.1 981.9 488.1 982.2 486.1 984.5 486.3 986.3 484.3 987.6 483.0 989.2 481.9 990.2 480.0 990.9 478.2 993.6 477.6 995.9 477.1 995.4 474.4 995.2 469.6 997.4 468.2 998.4 467.9 998.0 470.8 998.6 473.2 997.5 474.8 999.0 476.7 1001.0 475.8 1003.0 476.7 1006.4 475.5 1009.1 475.1 1010.7 475.8 1012.4 473.7 1012.4 469.6 1014.4 467.9 1016.7 469.1 1017.0 466.4 1015.8 464.1 1019.1 463.3 1021.8 463.1 1024.8 462.3 1022.5 460.4 1019.1 460.9 1015.1 462.3 1013.1 460.4 1012.8 456.5 1014.4 452.2 1017.8 447.6 1018.2 446.0 1015.8 445.1 1013.4 447.0 1012.4 450.7 1009.1 453.7 1007.4 457.9 1007.3 460.7 1009.5 462.0 1008.4 464.6 1006.5 467.2 1006.4 470.8 1005.0 471.8 1003.4 473.2 1001.7 473.4 1001.4 470.8 1000.1 468.2 999.0 464.6 998.3 463.3 997.0 464.6 994.7 467.2 992.3 465.9 990.9 462.0 990.9 456.5 993.6 453.7 997.0 451.3 999.0 448.2 1001.0 444.4 1003.0 439.4 1005.7 435.1 1009.1 431.0 1012.4 429.4 1015.8 427.0 1018.9 425.8 1021.8 426.2 1025.8 429.0 1024.5 431.4 1028.5 432.5 1032.6 433.6 1037.9 437.6 1039.5 441.1 1038.6 443.1 1034.6 444.1 1029.9 442.1 1028.3 441.8 1031.0 449.2 1033.9 451.0 1035.2 449.2 1038.6 448.9 1037.9 445.1 1041.3 443.1 1043.3 444.4 1043.7 439.4 1042.9 435.8 1046.0 437.6 1046.7 441.1 1048.7 438.7 1055.4 435.1 1060.8 435.5 1064.8 434.0 1066.1 431.0 1070.2 432.9 1074.2 434.7 1076.9 435.8 1074.9 428.2 1074.9 424.2 1077.6 417.6 1081.6 418.5 1081.6 426.2 1080.9 434.0 1083.3 437.6 1083.6 424.2 1085.0 418.5 1089.7 420.8 1092.3 415.3 1100.4 413.9 1101.1 408.0 1109.1 402.7 1117.2 401.0 1123.9 392.8 1126.6 395.2 1136.0 402.7 1136.7 413.0 1132.0 413.4 1136.0 414.9 1144.1 417.6 1150.1 415.3 1154.8 419.9 1158.2 426.2 1162.9 424.2 1168.2 424.2 1172.3 419.9 1180.3 420.8 1185.7 424.2 1193.8 426.2 1193.8 463.3 1189.7 463.8 1184.4 463.3 1176.3 464.1 1172.3 468.4 1168.9 474.4 1168.2 476.7 1172.3 477.8 1174.0 480.0 1172.9 485.3 1170.9 490.3 1167.6 495.1 1163.5 498.8 1161.3 498.8 1159.5 500.1 1158.2 502.4 1155.8 504.5 1156.6 506.5 1157.9 509.2 1158.0 511.7 1155.9 513.0 1153.9 513.3 1154.1 510.0 1154.5 508.4 1152.4 507.5 1152.1 504.8 1151.2 504.1 1147.8 502.7 1146.8 505.8 1144.1 505.5 1142.5 506.2 1143.8 508.4 1146.5 507.9 1148.8 508.9 1146.5 510.4 1144.7 512.5 1146.5 516.0 1147.8 518.0 1148.1 520.4 1147.4 522.9 1145.4 525.6 1143.8 528.1 1141.4 530.0 1138.0 531.5 1134.7 532.6 1132.4 533.3 1132.0 534.6 1131.6 532.9 1129.3 532.7 1127.5 534.3 1126.2 536.4 1127.9 539.2 1130.4 541.3 1131.0 544.7 1130.6 546.7 1127.9 548.2 1125.7 550.4 1125.0 548.8 1123.2 548.0 1121.9 545.9 1119.9 545.0 1118.8 544.0 1118.5 546.1 1117.6 548.1 1118.3 549.7 1119.2 552.1 1121.0 553.5 1122.6 555.1 1123.2 557.5 1124.2 560.1 1123.2 560.2 1120.6 558.4 1119.2 556.1 1118.9 553.7 1117.2 551.7 1116.3 550.8 1116.7 548.1 1116.8 545.4 1115.6 542.0 1115.3 539.9 1113.2 539.9 1111.2 540.6 1110.9 537.1 1109.8 535.0 1107.8 532.9 1107.1 531.5 1105.1 532.2 1103.1 532.5 1101.1 533.6 1100.8 534.6 1098.4 535.7 1096.4 537.8 1094.6 539.6 1092.1 541.1 1091.8 544.0 1091.5 546.7 1090.6 548.4 1089.3 550.1 1088.3 551.3 1087.0 550.1 1085.9 546.7 1084.7 544.7 1083.9 542.0 1082.7 539.2 1082.0 536.1 1081.9 533.6 1080.9 533.3 1078.9 533.9 1076.9 531.7 1078.2 531.0 1076.2 530.0 1074.6 528.1 1072.9 527.2 1067.5 527.5 1063.5 527.2 1061.2 526.7 1060.5 524.9 1057.8 525.5 1055.4 524.9 1052.7 523.4 1051.8 520.4 1049.8 519.7 1048.7 520.5 1049.4 522.6 1051.4 525.2 1051.8 527.1 1053.0 526.4 1053.4 528.1 1054.7 529.0 1057.0 528.9 1059.4 526.4 1060.0 528.1 1060.8 529.3 1063.2 530.0 1064.5 531.5 1062.8 534.3 1061.7 536.4 1060.1 537.8 1058.1 539.2 1054.3 541.0 1050.0 543.3 1045.3 544.7 1042.6 545.1 1041.7 542.2 1041.3 539.9 1039.3 536.7 1036.9 533.6 1035.9 530.0 1033.9 527.1 1031.9 523.7 1031.0 521.3 1030.3 523.4 1029.3 522.9 1028.0 520.4 1027.7 518.5 1030.3 518.2 1031.2 516.0 1032.3 513.3 1032.6 510.9 1032.8 509.5 1030.5 509.7 1027.9 510.7 1025.2 510.0 1023.2 510.0 1020.9 509.4 1020.9 507.9 1019.5 506.7 1019.4 505.0 1019.4 503.8 1016.4 502.7 1015.8 504.1 1014.8 503.4 1014.7 505.3 1015.8 506.7 1016.4 507.4 1015.4 507.9 1015.0 510.0 1013.8 509.7 1012.7 508.4 1012.4 506.7 1011.1 505.0 1010.3 503.2 1010.4 501.0 1008.4 499.3 1005.7 497.9 1004.4 496.0 1003.0 494.7 1002.5 493.8 1000.7 494.4 1000.9 496.4 1002.5 497.9 1003.7 500.1 1005.7 501.0 1009.1 503.8 1008.9 504.5 1007.0 503.2 1006.5 505.0 1007.2 505.8 1006.0 507.5 1005.3 507.5 1005.7 505.8 1004.8 504.1 1003.4 502.9 1001.0 501.5 999.0 499.9 998.0 497.9 996.0 496.2 994.3 497.3 992.3 498.6 990.2 498.1 988.4 498.6 988.5 500.8 986.9 501.8 985.3 502.7 983.8 505.0 984.5 506.2 983.3 507.9 981.5 509.5 978.2 509.7 976.9 510.7 975.7 509.5 974.1 508.9ZM976.8 485.1 979.5 484.5 982.9 483.8 985.9 482.8 986.2 479.6 984.6 478.9 983.9 476.7 982.2 474.4 981.5 472.0 980.2 472.0 981.5 468.2 978.8 467.9 979.9 465.6 977.5 465.6 976.1 468.4 976.8 471.6 977.5 474.4 979.5 474.6 980.2 476.7 979.9 478.2 978.2 478.2 978.6 480.4 977.2 481.5 979.5 482.4 978.4 483.2ZM970.8 481.9 973.5 481.9 975.9 480.4 976.1 477.8 976.7 475.5 975.5 473.9 973.2 473.9 970.8 476.2 971.4 478.5 970.8 480.6ZM1053.4 424.2 1056.7 427.4 1061.4 427.8 1060.8 422.1 1059.4 416.3 1062.1 412.0 1066.1 406.5 1071.5 401.6 1076.2 398.2 1072.9 397.0 1064.8 401.0 1059.4 406.5 1056.7 415.3 1054.1 419.9ZM1160.1 514.1 1162.2 513.6 1165.6 513.1 1168.0 513.3 1170.7 513.0 1172.3 512.2 1173.4 509.5 1173.6 506.7 1174.7 504.1 1174.0 501.7 1172.3 502.7 1172.0 505.8 1170.3 508.7 1168.2 509.2 1166.9 510.9 1162.9 511.7 1160.2 513.3ZM1172.7 501.5 1174.3 499.7 1176.7 500.6 1179.4 498.3 1178.1 497.0 1175.0 494.4 1174.3 497.9 1172.7 499.7ZM1130.6 560.1 1132.0 559.8 1133.7 558.8 1136.0 557.9 1138.0 555.7 1140.0 553.2 1141.8 553.1 1144.1 555.1 1142.7 556.5 1142.5 558.8 1143.8 560.8 1142.0 562.8 1140.7 564.8 1140.0 567.4 1138.0 567.4 1136.0 566.3 1134.0 566.3 1132.2 565.4 1131.7 563.4 1130.6 561.7ZM1160.2 563.2 1164.2 563.2 1165.6 566.5 1169.3 564.1 1173.6 565.5 1178.3 567.1 1180.3 569.4 1182.8 570.3 1181.7 571.4 1183.7 574.1 1186.4 576.1 1182.4 575.4 1180.3 573.0 1177.0 573.4 1175.0 574.4 1172.3 573.0 1169.9 573.1 1170.3 570.7 1166.9 568.3 1163.5 567.4 1162.6 565.8ZM1136.7 592.0 1137.6 591.7 1140.7 590.0 1144.1 589.2 1147.4 587.8 1148.5 585.4 1150.2 584.7 1152.1 582.2 1154.5 580.9 1156.4 582.0 1158.2 582.1 1159.2 578.9 1161.5 577.2 1165.6 578.3 1168.0 578.4 1166.9 580.2 1166.2 582.2 1168.9 583.6 1171.3 585.7 1173.4 585.7 1174.3 582.2 1174.6 579.2 1175.6 576.5 1177.0 578.8 1177.4 581.3 1179.4 582.2 1180.3 585.7 1181.0 587.8 1183.7 589.5 1185.7 592.5 1187.1 594.6 1189.7 597.1 1190.4 600.8 1189.7 605.4 1187.7 609.3 1186.1 613.3 1185.7 615.8 1182.4 616.7 1180.7 618.4 1178.3 617.0 1176.3 617.9 1173.4 616.7 1171.9 614.2 1170.0 612.5 1169.6 608.5 1168.9 612.5 1166.9 611.7 1166.0 610.6 1164.5 608.0 1160.9 606.2 1157.5 606.3 1153.5 607.4 1150.8 608.5 1149.8 610.1 1145.4 610.1 1142.7 611.7 1139.8 610.9 1139.0 609.3 1139.6 606.6 1138.7 603.8 1137.6 600.1 1136.4 597.1 1137.1 594.9Z" fill="#e9e9e9" stroke="#e9e9e9" stroke-width="0.5" stroke-linejoin="round"/>
<path d="M904.5 490.1 905.6 487.3 907.6 483.6 909.2 482.1 909.6 485.3 912.3 486.3 913.0 488.3 913.3 491.3 912.1 491.9 909.6 491.5 909.0 490.1ZM1125.5 571.1 1127.3 570.1 1130.0 570.7 1133.0 570.6 1135.6 571.3 1138.0 572.5 1137.9 573.6 1134.0 573.1 1130.0 572.5 1127.3 571.9ZM1140.0 573.3 1144.1 573.3 1149.4 573.1 1152.1 573.1 1154.8 573.3 1152.1 574.8 1150.4 575.8 1145.4 575.4 1141.4 574.1ZM1145.0 561.0 1146.8 560.4 1150.1 560.9 1152.1 560.0 1151.5 561.6 1146.8 561.4 1145.8 563.2 1147.4 563.4 1149.8 563.2 1148.1 564.8 1148.8 566.7 1149.4 568.5 1148.1 568.5 1147.2 566.1 1146.1 566.1 1145.9 569.4 1144.7 569.4 1144.7 566.7 1143.8 565.7ZM1145.8 537.1 1148.4 537.4 1148.1 540.6 1147.4 542.9 1150.8 544.7 1149.4 543.6 1146.3 543.3 1145.4 540.6ZM1148.1 552.8 1150.1 550.8 1152.8 549.2 1154.1 551.5 1153.5 553.7 1152.5 554.4 1150.8 553.5ZM1148.1 546.3 1150.1 547.0 1152.5 545.7 1152.8 548.4 1150.8 548.8 1148.8 548.8ZM1141.8 550.8 1144.7 547.4 1145.0 548.1 1142.5 551.1ZM1155.5 559.4 1156.8 560.1 1156.2 562.8 1155.5 561.4ZM1156.2 566.1 1159.5 566.1 1159.5 566.9 1156.2 566.7ZM1130.2 536.1 1132.6 535.0 1133.3 535.7 1131.3 537.4ZM1146.8 527.5 1148.1 528.1 1146.5 532.2 1145.5 530.7ZM1162.2 514.4 1164.9 513.8 1164.6 515.2 1162.9 516.0ZM1158.8 514.9 1160.9 514.7 1160.9 518.0 1159.2 518.3 1158.6 516.2ZM1175.0 476.0 1176.3 478.9 1176.7 485.3 1176.3 490.3 1175.6 493.2 1175.0 490.3 1175.0 485.3 1174.7 480.0ZM879.0 537.3 881.7 537.5 881.0 538.1 879.1 537.8ZM893.9 537.1 895.9 537.3 895.8 537.8 893.9 537.8ZM884.3 537.3 886.1 535.2 890.2 535.3 892.3 536.8 889.5 537.5 888.1 538.1 886.8 537.5ZM870.0 532.3 872.7 530.7 876.1 530.6 880.8 532.9 884.5 534.6 880.1 535.2 878.7 533.6 874.3 531.9 871.4 532.5ZM902.3 641.8 906.3 641.6 906.3 643.6 902.3 643.6ZM1015.9 511.5 1019.4 512.0 1019.1 512.5 1015.9 512.2ZM1027.6 512.5 1030.5 511.5 1029.9 512.6 1028.1 513.1ZM995.8 499.0 997.0 499.0 996.7 501.7 995.9 501.5ZM995.4 502.4 997.2 502.4 997.1 505.5 995.6 505.8ZM1001.0 507.5 1005.0 507.2 1004.5 509.7 1001.0 508.4ZM1055.8 545.3 1057.4 545.3 1057.3 545.7 1055.9 545.7ZM1183.7 569.4 1187.1 567.8 1188.7 567.8 1187.7 569.5 1185.0 570.5ZM805.5 476.7 807.1 476.7 807.9 480.4 806.5 478.9ZM818.3 488.5 815.6 487.7 812.0 484.0 813.6 483.6 816.3 485.3 817.9 487.3ZM999.0 472.7 1001.1 472.0 1000.9 474.4 999.4 474.1ZM1008.6 467.4 1009.7 467.7 1009.2 469.6 1008.5 468.9ZM1091.4 549.2 1093.3 550.8 1094.1 552.8 1093.0 554.0 1091.7 554.1 1091.4 551.5ZM1178.6 621.3 1181.0 622.0 1183.3 621.5 1183.3 624.0 1182.1 625.9 1180.3 626.3 1179.4 624.1ZM1112.2 554.7 1115.2 555.2 1117.2 557.5 1119.2 559.0 1121.2 560.8 1123.2 562.8 1124.6 564.8 1126.6 566.1 1126.3 569.8 1124.6 569.8 1121.9 567.7 1119.9 565.7 1118.5 563.4 1116.8 560.1 1114.5 557.7Z" fill="#e9e9e9" fill-opacity="0.8"/>
<path d="M1021.8 501.5 1023.2 502.0 1026.5 502.0 1029.2 500.6 1031.2 500.6 1033.2 502.0 1035.9 502.4 1037.9 502.4 1040.1 501.3 1040.0 499.7 1037.9 497.9 1035.2 496.0 1033.9 495.1 1033.1 494.9 1031.6 495.3 1029.9 496.2 1029.2 495.1 1027.9 494.4 1029.3 493.2 1027.2 492.3 1025.6 492.3 1024.1 494.6 1022.8 496.0 1022.5 497.9 1021.5 499.3ZM1031.2 492.8 1033.2 494.4 1034.6 494.2 1035.9 492.6 1036.9 491.1 1035.2 490.9 1033.2 491.9ZM1019.4 503.8 1020.2 503.6 1021.1 503.4 1023.2 503.2 1023.4 502.6 1023.2 502.0 1021.8 501.5 1021.0 502.4 1020.2 502.9ZM1050.0 492.3 1052.7 491.3 1055.4 491.9 1055.4 494.6 1053.1 495.1 1052.7 496.4 1051.8 496.2 1054.7 499.7 1055.1 501.5 1056.5 502.4 1055.4 505.0 1056.5 506.7 1056.7 508.7 1054.1 509.5 1051.8 508.9 1050.0 508.0 1049.9 506.7 1050.7 503.6 1049.4 501.0 1048.0 498.8 1047.3 496.0 1048.0 494.0ZM1062.5 492.1 1064.1 492.5 1064.3 495.1 1062.9 495.7 1062.4 494.2ZM1082.9 492.3 1086.3 491.3 1090.3 491.7 1090.1 492.6 1085.6 492.6 1083.6 494.6ZM1123.6 482.1 1125.3 482.1 1128.6 478.9 1131.7 473.2 1130.6 472.7 1127.9 477.1 1125.3 480.4ZM1025.2 462.0 1028.3 461.2 1027.9 458.5 1025.2 457.9 1024.5 459.9ZM1030.5 459.3 1032.6 458.8 1031.9 455.1 1030.5 455.7ZM1001.0 465.9 1003.0 465.4 1002.6 463.8 1001.1 464.1ZM860.6 491.9 864.6 489.3 868.0 488.1 870.4 490.3 870.4 492.3 867.3 492.3 863.3 492.1ZM866.2 501.0 868.0 500.8 868.4 497.0 870.0 493.6 868.7 493.4 866.5 495.5 866.0 498.8ZM870.7 493.2 875.4 493.2 876.7 495.7 874.4 498.4 873.4 498.8 871.9 497.0 872.0 494.6ZM872.3 501.3 875.4 501.3 878.2 499.3 877.8 498.8 874.7 499.3ZM877.0 498.4 880.8 498.3 881.8 497.2 880.8 496.8 877.4 497.5ZM851.5 484.3 854.6 484.3 854.2 481.1 852.8 477.1 851.2 477.3 852.3 481.1ZM849.2 482.1 850.8 482.1 850.1 478.9 848.5 478.9ZM827.0 459.3 831.1 459.6 834.4 457.1 837.8 454.5 835.8 454.0 832.4 455.7 827.7 456.5ZM819.0 447.0 822.3 447.9 825.7 446.0 825.0 441.8 821.6 441.1 820.3 443.8 817.6 444.4ZM834.4 465.4 839.1 464.4 841.8 463.6 837.8 463.1ZM845.8 470.8 847.8 470.8 847.8 467.2 846.1 467.2ZM887.5 443.8 890.2 443.8 890.2 441.1 888.1 441.1ZM846.5 454.2 849.2 454.2 849.2 451.9 847.2 451.9ZM1026.8 562.8 1029.9 561.7 1030.5 564.1 1028.5 565.7 1026.9 565.0ZM1023.4 566.6 1024.2 566.7 1025.8 573.6 1025.0 573.6ZM1029.9 574.9 1030.7 575.0 1031.5 581.1 1030.7 581.1ZM887.5 547.7 888.8 547.7 888.8 549.8 887.5 549.8ZM890.0 582.6 891.1 583.1 891.8 584.2 890.7 583.9ZM868.7 546.1 870.0 546.3 870.3 547.3 869.1 547.0Z" fill="#c9c9c9"/>
</g>
<filter id="soft2" x="-5%" y="-5%" width="110%" height="110%"><feGaussianBlur stdDeviation="0.9"/></filter>
<path d="M863.3 422.1 868.7 413.9 875.4 413.9 880.8 418.5 884.8 422.9 890.2 427.8 893.5 434.0 899.6 439.4 901.6 442.8 898.2 447.6 895.5 448.5 896.9 453.7 894.9 456.5 892.2 455.1 888.8 454.0 884.8 449.8 880.1 449.8 879.4 447.6 884.8 446.7 885.5 441.1 886.1 436.9 883.4 435.1 879.4 430.2 878.1 429.8 870.7 429.8 868.7 428.6 864.6 426.6ZM816.3 422.1 819.0 425.4 823.0 424.2 827.0 419.9 828.4 416.3 826.4 412.0 821.6 410.5 817.6 413.0ZM827.0 430.2 832.4 433.3 839.1 434.7 844.5 435.5 847.8 433.3 847.2 428.2 843.1 426.2 843.1 419.9 839.1 416.7 835.1 418.5 831.1 416.7 825.7 418.5 824.3 424.2ZM847.2 424.2 851.2 425.0 853.9 419.9 852.5 413.9 848.5 413.9 846.5 418.5ZM855.9 422.1 859.3 421.2 862.6 417.6 862.0 413.0 856.6 413.0 855.2 417.6ZM851.2 434.0 855.2 435.5 855.9 432.1 853.2 430.2 851.2 432.1ZM867.3 446.7 871.4 444.4 875.4 449.2 876.1 451.9 872.0 454.2 869.3 453.1 867.3 451.3ZM860.6 399.9 864.6 405.4 871.4 404.3 876.7 409.5 876.7 405.4 874.0 401.0 866.0 399.3ZM863.3 390.9 866.0 398.8 875.4 400.5 879.4 398.2 882.1 390.9ZM827.0 408.0 833.7 410.5 840.5 409.0 841.8 403.8 836.4 399.9 828.4 401.6ZM844.5 405.4 852.5 408.0 853.9 402.7 849.9 398.8 844.5 400.5ZM819.0 401.6 824.3 403.8 828.4 397.0 824.3 394.0 820.3 397.0ZM844.5 390.9 849.9 395.8 856.6 394.0 857.9 390.9ZM1003.0 389.6 1004.4 399.3 1007.0 399.3 1009.7 394.0 1013.8 389.6ZM1168.2 404.3 1172.3 409.5 1177.6 408.0 1184.4 407.0 1185.7 404.3 1179.0 402.7 1172.3 402.7ZM1049.1 432.5 1051.1 432.1 1051.6 434.4 1049.6 434.7Z" fill="#e9e9e9" fill-opacity="0.85" filter="url(#soft2)"/>
<filter id="halo" x="-10%" y="-30%" width="120%" height="160%"><feMorphology in="SourceAlpha" operator="dilate" radius="0.9" result="d"/><feGaussianBlur in="d" stdDeviation="0.3" result="b"/><feFlood flood-color="#f4f4f4" flood-opacity="0.75"/><feComposite in2="b" operator="in" result="h"/><feMerge><feMergeNode in="h"/><feMergeNode in="SourceGraphic"/></feMerge></filter>
<text x="833.40" y="474.90" font-size="9.7" fill="#4e5062" textLength="32.50" lengthAdjust="spacingAndGlyphs" stroke="#4e5062" stroke-width="0.3" filter="url(#halo)">NORTH</text>
<text x="828.50" y="484.90" font-size="9.7" fill="#4e5062" textLength="41.90" lengthAdjust="spacingAndGlyphs" stroke="#4e5062" stroke-width="0.3" filter="url(#halo)">AMERICA</text>
<text x="898.90" y="581.60" font-size="9.7" fill="#4e5062" textLength="32.40" lengthAdjust="spacingAndGlyphs" stroke="#4e5062" stroke-width="0.3" filter="url(#halo)">SOUTH</text>
<text x="894.00" y="591.70" font-size="9.7" fill="#4e5062" textLength="42.00" lengthAdjust="spacingAndGlyphs" stroke="#4e5062" stroke-width="0.3" filter="url(#halo)">AMERICA</text>
<text x="996.80" y="486.20" font-size="9.7" fill="#4e5062" textLength="36.00" lengthAdjust="spacingAndGlyphs" stroke="#4e5062" stroke-width="0.3" filter="url(#halo)">EUROPE</text>
<text x="1111.00" y="476.90" font-size="9.7" fill="#4e5062" textLength="20.70" lengthAdjust="spacingAndGlyphs" stroke="#4e5062" stroke-width="0.3" filter="url(#halo)">ASIA</text>
<text x="999.50" y="557.70" font-size="9.7" fill="#4e5062" textLength="33.80" lengthAdjust="spacingAndGlyphs" stroke="#4e5062" stroke-width="0.3" filter="url(#halo)">AFRICA</text>
<text x="1144.30" y="594.20" font-size="9.7" fill="#4e5062" textLength="50.30" lengthAdjust="spacingAndGlyphs" stroke="#4e5062" stroke-width="0.3" filter="url(#halo)">AUSTRALIA</text>
<text x="908.10" y="517.00" font-size="9" fill="#8a8a8a" textLength="37.40" lengthAdjust="spacing" font-style="italic">Atlantic</text>
<text x="912.90" y="526.70" font-size="9" fill="#8a8a8a" textLength="29.70" lengthAdjust="spacing" font-style="italic">Ocean</text>
<text x="1074.10" y="587.60" font-size="9" fill="#8a8a8a" textLength="29.40" lengthAdjust="spacing" font-style="italic">Indian</text>
<text x="1074.60" y="598.10" font-size="9" fill="#8a8a8a" textLength="28.40" lengthAdjust="spacing" font-style="italic">Ocean</text>
<text x="771.50" y="520.10" font-size="9" fill="#8a8a8a" textLength="22.20" lengthAdjust="spacing" font-style="italic">Ocean</text>
<circle cx="850.9" cy="505" r="9.9" fill="#5fcdb2" fill-opacity="0.92" stroke="#22a283" stroke-width="0.8"/>
<circle cx="854.1" cy="454.8" r="3.9" fill="#5fcdb2" fill-opacity="0.92" stroke="#22a283" stroke-width="0.8"/>
<circle cx="979.6" cy="476.9" r="3.5" fill="#5fcdb2" fill-opacity="0.92" stroke="#22a283" stroke-width="0.8"/>
<circle cx="996.8" cy="483.1" r="3" fill="#5fcdb2" fill-opacity="0.92" stroke="#22a283" stroke-width="0.8"/>
<circle cx="986.1" cy="492" r="3" fill="#5fcdb2" fill-opacity="0.92" stroke="#22a283" stroke-width="0.8"/>
<circle cx="1161.9" cy="598.1" r="7" fill="#5fcdb2" fill-opacity="0.92" stroke="#22a283" stroke-width="0.8"/>
<rect x="789.9" y="639" width="4.4" height="4.4" fill="#f25022"/><rect x="795" y="639" width="4.4" height="4.4" fill="#7fba00"/><rect x="789.9" y="644.1" width="4.4" height="4.4" fill="#00a4ef"/><rect x="795" y="644.1" width="4.4" height="4.4" fill="#ffb900"/>
<text x="801.70" y="646.60" font-size="8.7" fill="#737373" textLength="49.20" lengthAdjust="spacingAndGlyphs">Microsoft Bing</text>
<text x="878.40" y="648.20" font-size="8.4" fill="#333" textLength="179.50" lengthAdjust="spacingAndGlyphs" stroke="#fff" stroke-width="1.4" stroke-linejoin="round" paint-order="stroke" stroke-opacity="0.8">© 2022 TomTom, © 2023 Microsoft Corporation,</text>
<text x="1059.60" y="648.20" font-size="8.4" fill="#4b5a8c" textLength="68.10" lengthAdjust="spacingAndGlyphs" stroke="#fff" stroke-width="1.4" stroke-linejoin="round" paint-order="stroke" stroke-opacity="0.8" text-decoration="underline">© OpenStreetMap</text>
<text x="1134.20" y="648.20" font-size="8.4" fill="#4b5a8c" textLength="22.80" lengthAdjust="spacingAndGlyphs" stroke="#fff" stroke-width="1.4" stroke-linejoin="round" paint-order="stroke" stroke-opacity="0.8" text-decoration="underline">Terms</text>
</g>
<rect x="781.2" y="392.2" width="401.6" height="266.6" fill="none" stroke="#2b2b2b" stroke-opacity="0.8" stroke-width="0.4"/>
</svg></div>
</body></html>
